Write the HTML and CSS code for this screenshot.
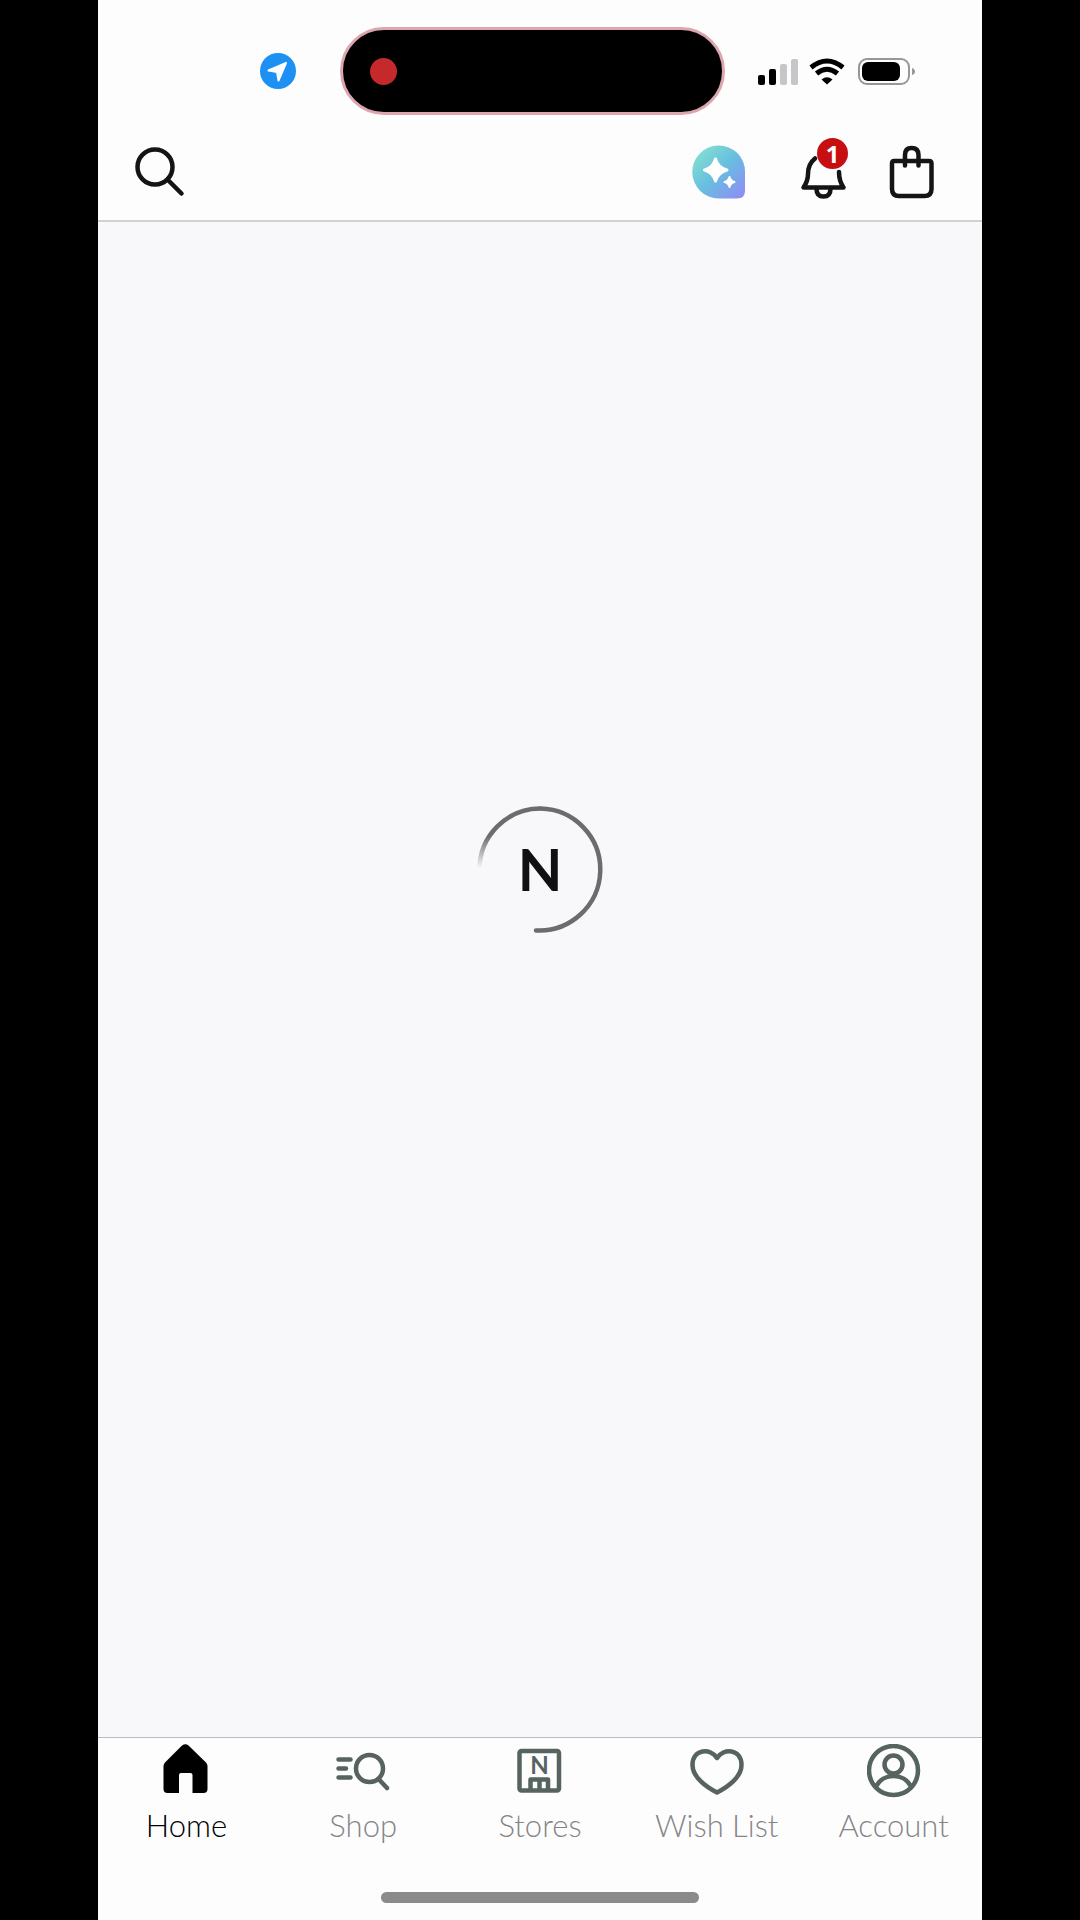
FILE: index.html
```html
<!DOCTYPE html>
<html lang="en">
<head>
<meta charset="utf-8">
<meta name="viewport" content="width=device-width, initial-scale=1">
<title>Home</title>
<link rel="stylesheet" href="styles.css">
</head>
<body>
<div class="app">
  <header class="header">
    <div class="status">
      <svg class="location" viewBox="0 0 36 36" aria-hidden="true">
        <circle cx="18" cy="18" r="18" fill="#1c90f3"/>
        <path d="M26 10L8.500 17.500L17 19L18.500 27.500Z" fill="#fff" stroke="#fff" stroke-width="2" stroke-linejoin="round"/>
      </svg>
      <div class="island"><span class="recording"></span></div>
      <svg class="signals" viewBox="0 0 158 28" aria-hidden="true">
        <rect x="0" y="18" width="7" height="10" rx="2"/>
        <rect x="11" y="12" width="7" height="16" rx="2"/>
        <g fill="#c6c6c8"><rect x="22" y="7" width="7" height="21" rx="2"/><rect x="33" y="2" width="7" height="26" rx="2"/></g>
        <g fill="none" stroke="#000" stroke-width="5">
          <path d="M53 10.500Q69 -2.500 85 10.500"/>
          <path d="M58.500 16.500Q69 8 79.500 16.500"/>
        </g>
        <path d="M63.500 22.500Q69 18 74.500 22.500L69 27.500Z"/>
        <rect x="101" y="2" width="50" height="25" rx="8" fill="none" stroke="#979799" stroke-width="2"/>
        <rect x="104" y="5" width="38" height="19" rx="6"/>
        <path d="M154 11Q157 12 157 14.500Q157 17 154 18Z" fill="#979799"/>
      </svg>
    </div>
    <div class="toolbar">
      <button class="tool" aria-label="Search">
        <svg viewBox="0 0 54 54" fill="none" stroke="#141414" stroke-width="4.500" stroke-linecap="round">
          <circle cx="22" cy="22" r="17.500"/><path d="M34.500 34.500L48.500 48.500"/>
        </svg>
      </button>
      <button class="tool assistant" aria-label="Shopping assistant">
        <svg viewBox="0 0 54 54">
          <defs><linearGradient id="bubble" x1="0" y1="0" x2="1" y2="1">
            <stop offset="0.100" stop-color="#82dfd0"/><stop offset="0.500" stop-color="#67bfe0"/><stop offset="0.900" stop-color="#8a93f2"/>
          </linearGradient></defs>
          <path d="M26.500 0.500A26 26 0 0 1 53 27V46Q53 53.500 45 53.500H27A26.500 26.500 0 0 1 26.500 0.500Z" fill="url(#bubble)"/>
          <path d="M23.500 14Q26 23 35 25Q26 27.500 23.500 36Q21 27.500 12.500 25Q21 23 23.500 14Z" fill="#fff" stroke="#fff" stroke-width="3" stroke-linejoin="round"/>
          <path d="M37.500 32Q38.500 36 42.500 37Q38.500 38 37.500 42Q36.500 38 32.500 37Q36.500 36 37.500 32Z" fill="#fff" stroke="#fff" stroke-width="2" stroke-linejoin="round"/>
        </svg>
      </button>
      <button class="tool alerts" aria-label="Notifications">
        <svg viewBox="0 0 54 54" fill="none" stroke="#141414" stroke-width="4.500" stroke-linecap="round" stroke-linejoin="round">
          <path d="M19 13.500Q12 19 12 29Q12 36 7.500 42.500H47.500Q43 36 43 27"/>
          <path d="M20.500 44Q20.500 51.500 27.500 51.500Q34.500 51.500 34.500 44"/>
        </svg>
        <span class="badge">1</span>
      </button>
      <button class="tool bag" aria-label="Shopping bag">
        <svg viewBox="0 0 54 54" fill="none" stroke="#141414" stroke-width="4.500" stroke-linecap="round">
          <path d="M9 16H44Q46.500 16 46.500 18.500V44Q46.500 51 39.500 51H14Q7 51 7 44V18.500Q7 16 9 16Z"/>
          <path d="M20 20.500V10Q20 3 26.500 3Q33.500 3 33.500 10V20.500"/>
        </svg>
      </button>
    </div>
  </header>

  <main class="content">
    <div class="loader" role="status" aria-label="Loading">
      <svg class="ring" viewBox="0 0 128 128" fill="none" stroke-width="4.500">
        <defs><linearGradient id="fade" gradientUnits="userSpaceOnUse" x1="0" y1="62" x2="0" y2="30">
          <stop offset="0" stop-color="#6d6a70" stop-opacity="0"/><stop offset="1" stop-color="#6d6a70"/>
        </linearGradient></defs>
        <path d="M3.500 63.500A61 61 0 0 1 64.500 2.500" stroke="url(#fade)"/>
        <path d="M64.500 2.500A61 61 0 1 1 60 124.400" stroke="#6d6a70" stroke-linecap="round"/>
      </svg>
      <span class="monogram">N</span>
    </div>
  </main>

  <footer class="footer">
    <nav class="tabs" aria-label="Main">
      <a class="tab active" href="#home">
        <svg viewBox="0 0 54 54"><path d="M23 1.500Q26.500 -1 29.500 1.500L47 18.500Q48.500 20 48.500 22V45Q48.500 49 44.500 49H33.500V31Q33.500 29 31.500 29H22Q20 29 20 31V49H8.500Q4.500 49 4.500 45V22Q4.500 20 6 18.500Z" fill="#000"/></svg>
        <span>Home</span>
      </a>
      <a class="tab" href="#shop">
        <svg class="line" viewBox="0 0 54 54"><path d="M2.500 15.500H14.500M2.500 24.500H10M2.500 33.500H14.500M42.500 35L51 44"/><circle cx="33.500" cy="24.500" r="13.500"/></svg>
        <span>Shop</span>
      </a>
      <a class="tab" href="#stores">
        <svg class="line" viewBox="0 0 54 54">
          <rect x="6.500" y="7" width="39.500" height="39.500" rx="2"/>
          <path d="M17.500 46V35.500H35V46M26.500 36V46"/>
          <text class="sign" x="26.500" y="30" text-anchor="middle">N</text>
        </svg>
        <span>Stores</span>
      </a>
      <a class="tab" href="#wish-list">
        <svg class="line" viewBox="0 0 54 54"><path d="M27 14C21 4 2.500 4.500 2.500 21C2.500 33 16 43 27 48.500C38 43 51.500 33 51.500 21C51.500 4.500 33 4 27 14Z"/></svg>
        <span>Wish List</span>
      </a>
      <a class="tab" href="#account">
        <svg class="line" viewBox="0 0 54 54"><circle cx="26.500" cy="26.500" r="24.500"/><circle cx="26.500" cy="20.500" r="9"/><path d="M9 42.500C16 28.500 37 28.500 44 42.500"/></svg>
        <span>Account</span>
      </a>
    </nav>
    <div class="home-bar"></div>
  </footer>
</div>
</body>
</html>
```

FILE: styles.css
```css
* {
  box-sizing: border-box;
}

body {
  margin: 0;
  padding: 0 98px;
  background: #000;
  font-family: Lato, sans-serif;
}

svg {
  display: block;
}

.app {
  display: flex;
  flex-direction: column;
  min-height: 100vh;
  background: #f8f8fb;
}

.header {
  padding-top: 27px;
  background: #fefdfe;
  border-bottom: 2px solid #d2d2d4;
}

.status {
  display: flex;
  align-items: center;
  padding: 0 66px 0 162px;
}

.location {
  width: 36px;
  height: 36px;
  margin-right: 44px;
}

.island {
  display: flex;
  flex: 1;
  align-items: center;
  height: 88px;
  padding-left: 27px;
  border: 3px solid #dda5ad;
  border-radius: 44px;
  background: #000;
}

.recording {
  width: 27px;
  height: 27px;
  border-radius: 50%;
  background: #c5292b;
}

.signals {
  width: 158px;
  height: 28px;
  margin-left: 33px;
}

.toolbar {
  display: flex;
  align-items: center;
  height: 105px;
  padding: 9px 43px 0 35px;
}

.tool {
  position: relative;
  padding: 0;
  border: 0;
  background: none;
}

.tool svg {
  width: 54px;
  height: 54px;
}

.assistant {
  margin-left: auto;
}

.alerts {
  margin-left: 50px;
}

.bag {
  margin-left: 35px;
}

.badge {
  position: absolute;
  top: -7px;
  right: 2px;
  width: 31px;
  height: 31px;
  border-radius: 50%;
  background: #c70f12;
  color: #fff;
  font: 700 24px/31px "Noto Sans", sans-serif;
  text-align: center;
}

.content {
  display: flex;
  flex: 1;
  align-items: center;
  justify-content: center;
  padding-bottom: 220px;
}

.loader {
  display: grid;
  place-items: center;
}

.ring,
.monogram {
  grid-area: 1 / 1;
}

.ring {
  width: 128px;
  height: 128px;
}

.monogram {
  padding-bottom: 2px;
  color: #101012;
  font-size: 58px;
  font-weight: 700;
  line-height: 58px;
}

.footer {
  padding-bottom: 17px;
  border-top: 1px solid #bcbcc0;
  background: #fefdfe;
}

.tabs {
  display: flex;
  padding-top: 6px;
}

.tab {
  display: flex;
  flex: 1;
  flex-direction: column;
  align-items: center;
  gap: 9px;
  color: #858587;
  font-size: 31px;
  font-weight: 300;
  line-height: 36px;
  text-decoration: none;
}

.tab svg {
  width: 54px;
  height: 54px;
}

.active {
  color: #000;
}

.line {
  fill: none;
  stroke: #56635f;
  stroke-width: 4.5;
  stroke-linecap: round;
  stroke-linejoin: round;
}

.sign {
  fill: #56635f;
  stroke: none;
  font-size: 24px;
  font-weight: 700;
}

.home-bar {
  width: 36%;
  height: 11px;
  margin: 49px auto 0;
  border-radius: 6px;
  background: #8b8b8b;
}
```
